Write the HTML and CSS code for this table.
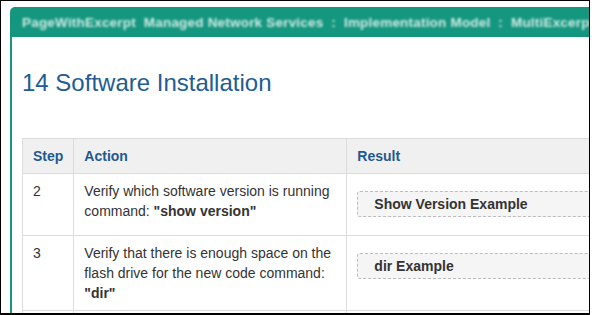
FILE: index.html
```html
<!DOCTYPE html>
<html lang="en">
<head>
<meta charset="utf-8">
<title>14 Software Installation</title>
<link rel="stylesheet" href="styles.css">
</head>
<body>
<div class="frame">
  <div class="panel">
    <div class="panel-head"><span class="crumbs">PageWithExcerpt&nbsp; Managed Network Services&nbsp; :&nbsp; Implementation Model&nbsp; :&nbsp; MultiExcerpt</span></div>
    <div class="panel-body">
      <h1 class="title">14 Software Installation</h1>
      <table class="steps">
        <thead>
          <tr>
            <th class="col-step">Step</th>
            <th class="col-action">Action</th>
            <th class="col-result">Result</th>
          </tr>
        </thead>
        <tbody>
          <tr>
            <td>2</td>
            <td>Verify which software version is running<br>command: <b>"show version"</b></td>
            <td><div class="example">Show Version Example</div></td>
          </tr>
          <tr>
            <td>3</td>
            <td>Verify that there is enough space on the flash drive for the new code command:<br><b>"dir"</b></td>
            <td><div class="example">dir Example</div></td>
          </tr>
          <tr class="next">
            <td></td>
            <td></td>
            <td></td>
          </tr>
        </tbody>
      </table>
    </div>
  </div>
</div>
</body>
</html>
```

FILE: styles.css
```css
html, body {
  margin: 0;
  padding: 0;
  background: #fff;
}

body {
  font-family: "Liberation Sans", Arial, sans-serif;
  color: #333;
}

.frame {
  box-sizing: border-box;
  width: 590px;
  height: 315px;
  border-top: 1px solid #000;
  border-left: 1px solid #000;
  border-right: 1px solid #000;
  border-bottom: 2px solid #000;
  overflow: hidden;
  background: #fff;
}

.panel {
  margin: 6px 0 0 9px;
  width: 640px;
}

.panel-head {
  height: 30px;
  background: #15977f;
  border-top-left-radius: 5px;
  padding-left: 12px;
  line-height: 30px;
  white-space: nowrap;
  overflow: hidden;
}

.crumbs {
  font-size: 13.5px;
  font-weight: bold;
  letter-spacing: 0.2px;
  color: rgba(255, 255, 255, 0.8);
  filter: blur(1.2px);
  display: inline-block;
}

.panel-body {
  border-left: 2px solid #15977f;
  padding: 31px 0 0 10px;
}

.title {
  margin: 0 0 40px 0;
  font-size: 24px;
  line-height: 30px;
  font-weight: normal;
  color: #215d93;
}

.steps {
  border-collapse: collapse;
  width: 640px;
  font-size: 14px;
  line-height: 20px;
}

.steps th,
.steps td {
  border: 1px solid #dcdcdc;
  text-align: left;
  vertical-align: top;
  padding: 7px 10px 7px 10px;
}

.steps th {
  background: #f0f0f0;
  color: #1f5a8f;
  font-weight: bold;
}

.steps .next td {
  height: 20px;
}

.col-step { width: 30px; }
.col-action { width: 252px; }

.steps td b {
  color: #333;
}

.example {
  margin: 10px 0 11px 0;
  padding: 2px 16px;
  border: 1px dashed #bdbdbd;
  border-radius: 3px;
  background: #f5f5f5;
  font-weight: bold;
  color: #333;
}
```
